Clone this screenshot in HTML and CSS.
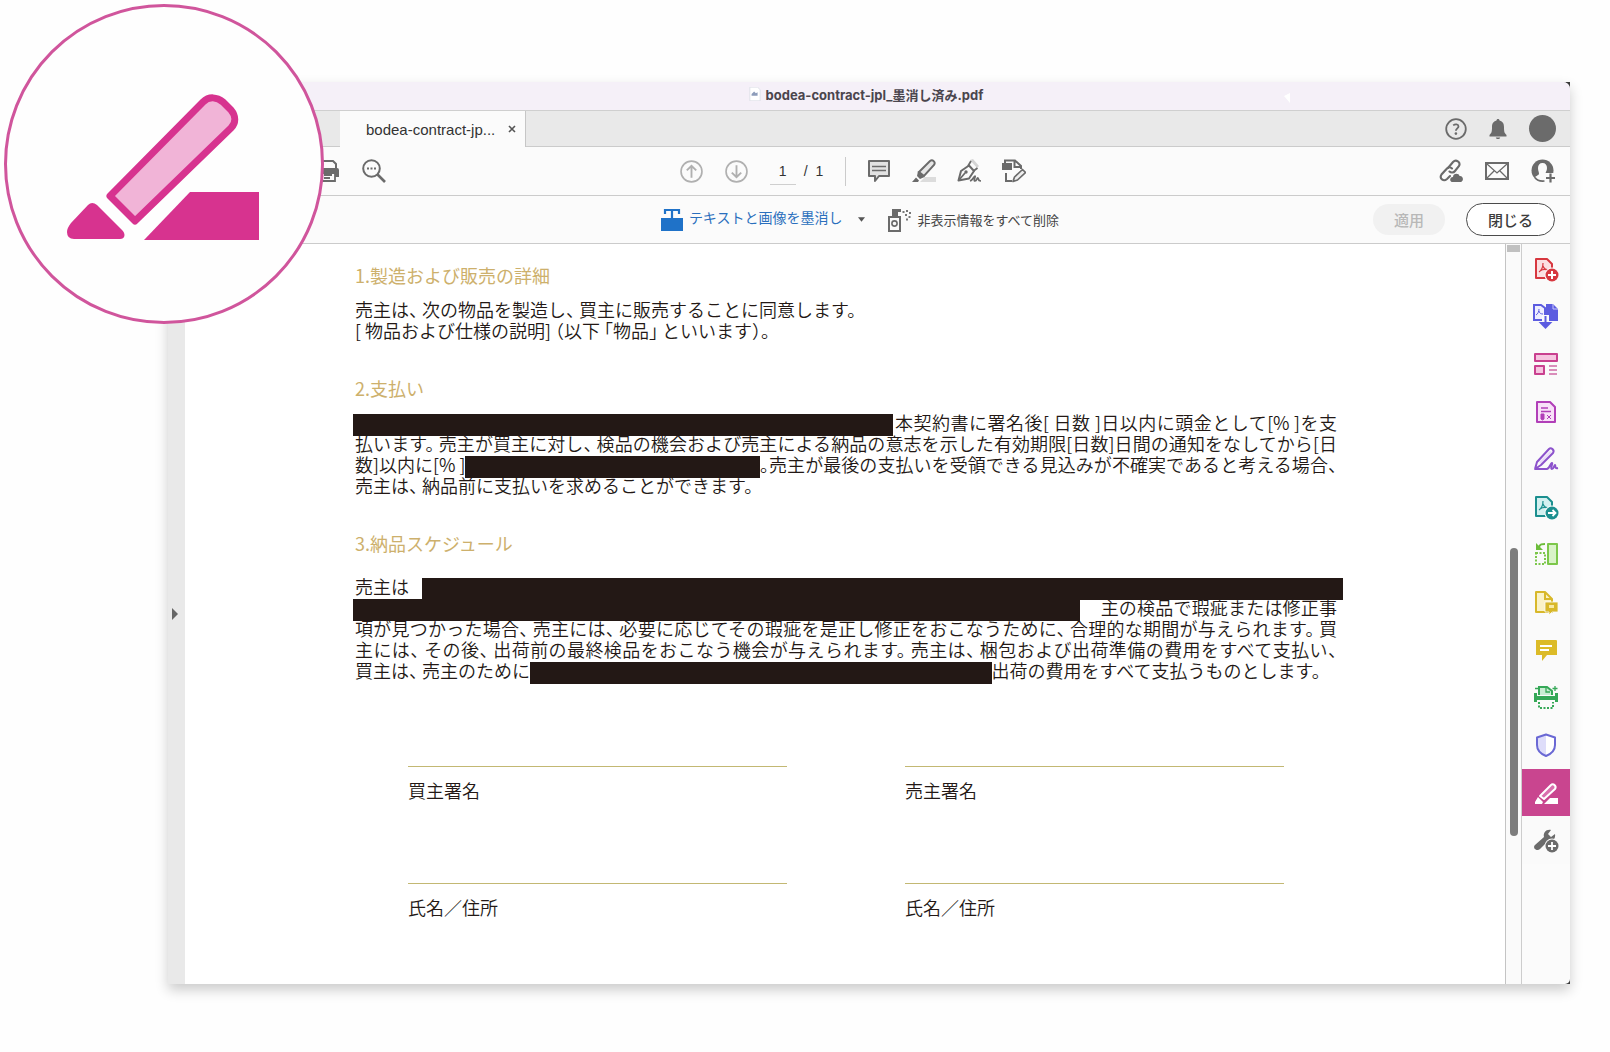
FILE: index.html
```html
<!DOCTYPE html>
<html lang="ja">
<head>
  <meta charset="UTF-8">
  <title>bodea-contract-jpl_墨消し済み.pdf</title>
  <link rel="stylesheet" href="styles.css">
</head>
<body>

  <div class="frame">
    <div class="window">

      <header class="titlebar">
        <svg class="file-icon" viewBox="0 0 14 16"><path d="M1 0h9l3 3v13H1z" fill="#fff" stroke="#dcdfe8"/><path d="M3 8l3-3 2 2 2-1v4H3z" fill="#8d9cba"/></svg>
        <span>bodea-contract-jpl_墨消し済み.pdf</span>
        <svg class="pointer" viewBox="0 0 6 10"><path d="M0 3l6-3v10z" fill="#fff"/></svg>
      </header>

      <div class="tabbar">
        <div class="tab">
          <span>bodea-contract-jp...</span>
          <button class="tab-close" aria-label="閉じる"><svg viewBox="0 0 8 8"><path d="M1 1l6 6M7 1L1 7" stroke="#555" stroke-width="1.6"/></svg></button>
        </div>
        <div class="account">
          <button aria-label="ヘルプ"><svg viewBox="0 0 22 22"><circle cx="11" cy="11" r="9.8" fill="none" stroke="#6b6b6b" stroke-width="1.8"/><path d="M8.2 7.4c2-1.6 5.3-1.2 5.3 1 0 2-2.6 2-2.6 4.4" fill="none" stroke="#6b6b6b" stroke-width="1.8"/><circle cx="10.9" cy="15.6" r="1.3" fill="#6b6b6b"/></svg></button>
          <button aria-label="通知"><svg viewBox="0 0 22 22"><path d="M11 1c1 0 1.5.6 1.5 1.5C16 3.4 17 6 17 9c0 5 .5 6 2.5 8v1.5H2.500V17C4.500 15 5 14 5 9c0-3 1-5.600 4.500-6.500C9.500 1.600 10 1 11 1zM8.800 19.500h4.400c-.4 2-4 2-4.400 0z" fill="#6b6b6b"/></svg></button>
          <button class="avatar" aria-label="アカウント"></button>
        </div>
      </div>

      <div class="toolbar">
        <div class="tools-left">
          <button aria-label="印刷"><svg viewBox="0 0 24 24"><path d="M5 9V2h12l3 3v4" fill="none" stroke="#6b6b6b" stroke-width="2"/><path d="M2 9h19a2 2 0 0 1 2 2v7h-4v-3H5v3H1v-7z" fill="#6b6b6b"/><path d="M5 14v8h14v-8M8 16h8M8 19h6" fill="none" stroke="#6b6b6b" stroke-width="1.8"/></svg></button>
          <button aria-label="検索"><svg viewBox="0 0 24 24"><circle cx="9.5" cy="9.5" r="8.3" fill="none" stroke="#6b6b6b" stroke-width="2"/><path d="M15.500 15.500L23 23" stroke="#6b6b6b" stroke-width="2.6"/><path d="M5 8.500h2v2H5zM8.500 8.500h2v2h-2zM12 8.500h2v2h-2z" fill="#6b6b6b"/></svg></button>
        </div>

        <div class="tools-center">
          <button aria-label="前のページ"><svg viewBox="0 0 22 22"><circle cx="11" cy="11" r="10" fill="none" stroke="#b0b0b0" stroke-width="1.6"/><path d="M11 17V5.500M6.500 10L11 5.500l4.500 4.500" fill="none" stroke="#b0b0b0" stroke-width="1.8"/></svg></button>
          <button aria-label="次のページ"><svg viewBox="0 0 22 22"><circle cx="11" cy="11" r="10" fill="none" stroke="#b0b0b0" stroke-width="1.6"/><path d="M11 5v11.500M6.500 12l4.500 4.500 4.500-4.500" fill="none" stroke="#b0b0b0" stroke-width="1.8"/></svg></button>
          <div class="pager">
            <input type="text" value="1" aria-label="ページ番号">
            <span>/&nbsp; 1</span>
          </div>
          <div class="annotate">
            <button aria-label="注釈"><svg viewBox="0 0 24 24"><path d="M2 2h20v15H12l-4 5v-5H2z" fill="#e2e2e2" stroke="#6b6b6b" stroke-width="2" stroke-linejoin="round"/><path d="M5 7.500h14M5 11.500h14" stroke="#6b6b6b" stroke-width="1.6"/></svg></button>
            <button aria-label="ハイライト"><svg viewBox="0 0 24 24"><path d="M13 18h11v5H8z" fill="#dcdcdc"/><path d="M7 13L18 2c2.500-2 6 1 4 4L12 17z" fill="#e6e6e6" stroke="#6b6b6b" stroke-width="2"/><path d="M6 12l6.500 6L8 20l-3-3zM4 18.500l3 3-1 1.500H0z" fill="#6b6b6b"/></svg></button>
            <button aria-label="署名"><svg viewBox="0 0 24 24"><path d="M13 1l3-1 6 7-2 2z" fill="#d5d5d5"/><path d="M1.500 21.500L4 12l8-5.500 5 5.500-5 7.500z" fill="none" stroke="#6b6b6b" stroke-width="2" stroke-linejoin="round"/><path d="M11 7l3-5M16.500 12l4-3M2 21l6-7" fill="none" stroke="#6b6b6b" stroke-width="1.8"/><circle cx="9" cy="13" r="1.7" fill="#6b6b6b"/><path d="M13 22c3-1 4-5 5-5s-2 5 0 5 2-4 3-3-.5 3 3 3" fill="none" stroke="#6b6b6b" stroke-width="1.7"/></svg></button>
            <button aria-label="編集"><svg viewBox="0 0 24 24"><path d="M0 4h10v7H0z" fill="#6b6b6b"/><path d="M3 4V1.500h10l6 5.500v3M12.500 2v6H19M4 14v8h6" fill="none" stroke="#6b6b6b" stroke-width="2"/><path d="M11 22.500l1.500-4.500 8-7.500 3 3-8 7.500z" fill="#eee" stroke="#6b6b6b" stroke-width="1.7" stroke-linejoin="round"/></svg></button>
          </div>
        </div>

        <div class="tools-right">
          <button aria-label="リンクを共有"><svg viewBox="0 0 24 24"><g fill="none" stroke="#6b6b6b" stroke-width="2.1" stroke-linecap="round"><path d="M9 9l5-6c3-3 8 0 6 4l-4 5c-1.500 2-4 2-5.500.5"/><path d="M13 9.500c-2-2-4-1.500-5.500.5l-5 5.500c-2.500 4 2 7.500 5.500 4.500l3-3"/></g><path d="M13 23c-3-1-2-5 1-5 0-4 6-4 6.500-1 4-.5 4.500 5 1.500 6z" fill="#6b6b6b"/></svg></button>
          <button aria-label="メール"><svg viewBox="0 0 24 24"><path d="M1 4h22v16H1z" fill="none" stroke="#6b6b6b" stroke-width="2"/><path d="M2 5l10 9L22 5M2 19l7-7M22 19l-7-7" fill="none" stroke="#6b6b6b" stroke-width="1.3"/></svg></button>
          <button aria-label="ユーザーを追加"><svg viewBox="0 0 24 24"><circle cx="11.5" cy="11.5" r="11" fill="#6b6b6b"/><path d="M11.500 4c3 0 4.500 2 4.500 5s-1.500 4-1.500 5.500l3 1.500-1 7h-10L4 18.500c1-2 4-2 4-4C8 13 7 12 7 9s1.500-5 4.500-5z" fill="#fbfbfb"/><path d="M14 14h10v10H14z" fill="#fbfbfb"/><path d="M19.500 14.500v9M15 19h9" stroke="#6b6b6b" stroke-width="2.2"/><path d="M4 18.500c2 3 5 4 9.500 3.500" fill="none" stroke="#6b6b6b" stroke-width="1.6"/></svg></button>
        </div>
      </div>

      <div class="redactbar">
        <div class="redact-tools">
          <button class="redact-mark">
            <svg viewBox="0 0 22 22"><path d="M0 9h22v13H0z" fill="#1f72c8"/><path d="M4 5V1h14v4M11 1v8" fill="none" stroke="#1f72c8" stroke-width="2.2"/></svg>
            <span>テキストと画像を墨消し</span>
            <svg class="caret" viewBox="0 0 8 5"><path d="M0 0h8L4 5z" fill="#555"/></svg>
          </button>
          <button class="redact-clean">
            <svg viewBox="0 0 24 24"><path d="M2 9h11v14H2z" fill="none" stroke="#6b6b6b" stroke-width="2"/><path d="M5 6h6v3H5zM5 1h9v3h-3v2H5z" fill="#6b6b6b"/><circle cx="7.5" cy="15.5" r="2.6" fill="none" stroke="#6b6b6b" stroke-width="1.6"/><path d="M15.500 3h2v2h-2zM19 2h2v2h-2zM22 4h2v2h-2zM18 6h2v2h-2zM21.500 8h2v2h-2zM19 10.500h2v2h-2z" fill="#777"/></svg>
            <span>非表示情報をすべて削除</span>
          </button>
        </div>
        <div class="redact-actions">
          <button class="btn-apply" disabled>適用</button>
          <button class="btn-close">閉じる</button>
        </div>
      </div>

      <div class="workspace">
        <button class="left-rail" aria-label="ナビゲーションパネル"><svg viewBox="0 0 6 12"><path d="M0 0l6 6-6 6z" fill="#666"/></svg></button>

        <main class="document">
          <h2>1.製造および販売の詳細</h2>
          <div class="clause">
            <p>売主は、 次の物品を製造し、 買主に販売することに同意します。</p>
            <p>[ 物品および仕様の説明] （以下 「物品」 といいます）。</p>
          </div>

          <h2>2.支払い</h2>
          <div class="clause">
            <p class="split"><span class="redacted from-edge w-55"></span><span class="full">本契約書に署名後[ 日数 ]日以内に頭金として[% ]を支</span></p>
            <p class="full">払います。 売主が買主に対し、 検品の機会および売主による納品の意志を示した有効期限[日数]日間の通知をなしてから[日</p>
            <p class="split"><span>数]以内に[% ]</span><span class="redacted w-30"></span><span class="full tight">。売主が最後の支払いを受領できる見込みが不確実であると考える場合、</span></p>
            <p>売主は、 納品前に支払いを求めることができます。</p>
          </div>

          <h2>3.納品スケジュール</h2>
          <div class="clause clause-delivery">
            <p class="split"><span class="word">売主は</span><span class="redacted to-edge"></span></p>
            <p class="split"><span class="redacted from-edge w-74"></span><span class="full after-gap">主の検品で瑕疵または修正事</span></p>
            <p class="full">項が見つかった場合、 売主には、 必要に応じてその瑕疵を是正し修正をおこなうために、 合理的な期間が与えられます。 買</p>
            <p class="full">主には、 その後、 出荷前の最終検品をおこなう機会が与えられます。 売主は、 梱包および出荷準備の費用をすべて支払い、</p>
            <p class="split"><span>買主は、 売主のために</span><span class="redacted w-47"></span><span>出荷の費用をすべて支払うものとします。</span></p>
          </div>

          <div class="signatures">
            <div class="sign">買主署名</div>
            <div class="sign">売主署名</div>
            <div class="sign">氏名／住所</div>
            <div class="sign">氏名／住所</div>
          </div>
        </main>

        <div class="scrollbar">
          <div class="scroll-stub"></div>
          <div class="scroll-thumb"></div>
        </div>

        <nav class="side-tools">
          <button aria-label="PDFを作成"><svg viewBox="0 0 24 24"><path d="M2 2h11l5 5v14H2z" fill="#fbe0e2" stroke="#d7373f" stroke-width="2" stroke-linejoin="round"/><path d="M5 15c3-2 4-5 4-9M9 9c1 3 3 4 6 4M6 14c3-2 5-2 8-1" fill="none" stroke="#d7373f" stroke-width="1.2"/><circle cx="18" cy="18" r="7.5" fill="#fafafa"/><circle cx="18" cy="18" r="6.500" fill="#d7373f"/><path d="M18 14v8M14 18h8" stroke="#fff" stroke-width="2"/></svg></button>
          <button aria-label="ファイルを結合"><svg viewBox="0 0 24 24"><path d="M0 1h7l4 3v12H0z" fill="#eeeefe" stroke="#5c5ce0" stroke-width="2"/><path d="M2 11c2-1 3-4 3-6M5 7c0 2 2 3 4 3" fill="none" stroke="#5c5ce0"/><path d="M12 0h7l5 5v12H12z" fill="#5c5ce0"/><path d="M19 0v5h5" fill="none" stroke="#c9c9fa"/><path d="M8 11h7v6h4l-7 7-7-7h3z" fill="#fafafa"/><path d="M11.500 12v7M7 19h9l-4.500 4.500z" fill="#5c5ce0" stroke="#5c5ce0" stroke-width="2"/></svg></button>
          <button aria-label="ページを整理"><svg viewBox="0 0 24 24"><path d="M1 2h22v7H1zM1 14h9v8H1z" fill="#f6c5e0" stroke="#c9408f" stroke-width="2" stroke-linejoin="round"/><path d="M15 14h8M15 18h8M15 22h8" stroke="#ce6aa5" stroke-width="1.3"/></svg></button>
          <button aria-label="フォームを準備"><svg viewBox="0 0 24 24"><path d="M3 2h13l5 5v15H3z" fill="#f8e0f8" stroke="#b13fb8" stroke-width="2" stroke-linejoin="round"/><path d="M7 8h7M7 11.500h10" stroke="#b13fb8" stroke-width="1.5"/><path d="M7 14h3v5l-1.500 1L7 19zM13 15l4 4m0-4l-4 4" fill="#b13fb8" stroke="#b13fb8"/></svg></button>
          <button aria-label="入力と署名"><svg viewBox="0 0 24 24"><path d="M5 15L16 4l2 1L7 17z" fill="#eadcf8"/><path d="M1 22l2-7L15 2c2-2 6 1 4 4L7 18l-6 4h12c3-1 3-5 5-6 1 0-2 6 0 6s2-4 3-4-1 4 3 3" fill="none" stroke="#8c52cc" stroke-width="2" stroke-linejoin="round"/></svg></button>
          <button aria-label="PDFを書き出し"><svg viewBox="0 0 24 24"><path d="M2 2h11l5 5v14H2z" fill="#d3f0f0" stroke="#1b8f8f" stroke-width="2" stroke-linejoin="round"/><path d="M5 15c3-2 4-5 4-9M9 9c1 3 3 4 6 4M6 14c3-2 5-2 8-1" fill="none" stroke="#1b8f8f" stroke-width="1.2"/><circle cx="18" cy="18" r="7.5" fill="#fafafa"/><circle cx="18" cy="18" r="6.500" fill="#1b8f8f"/><path d="M14 18h7M18.500 15l3 3-3 3" fill="none" stroke="#fff" stroke-width="1.8"/></svg></button>
          <button aria-label="ページの置換"><svg viewBox="0 0 24 24"><path d="M14 2h9v20h-9z" fill="#d9f3c8" stroke="#7cc74a" stroke-width="2" stroke-linejoin="round"/><path d="M2 11h9v11H2z" fill="none" stroke="#7cc74a" stroke-width="2" stroke-dasharray="2 1.500"/><path d="M2 1v7h7z" fill="#6cbd3a"/><path d="M5 5c1-3 3-3 6-3" fill="none" stroke="#6cbd3a" stroke-width="2"/></svg></button>
          <button aria-label="注釈用に送信"><svg viewBox="0 0 24 24"><path d="M2 2h9l7 7v13H2z" fill="#faf2c8" stroke="#d8b82a" stroke-width="2" stroke-linejoin="round"/><path d="M11 2v7h7" fill="none" stroke="#d8b82a" stroke-width="2"/><path d="M11 12h13v10h-6l-3 3v-3h-4z" fill="#d8b82a" stroke="#fafafa" stroke-width=".8"/><path d="M15 15h5v3h-5z" fill="#f7e9a4"/></svg></button>
          <button aria-label="注釈"><svg viewBox="0 0 24 24"><path d="M2 2h20a1 1 0 0 1 1 1v14H13l-5 6v-6H2z" fill="#dcbb28"/><path d="M6 8h12M6 12h9" stroke="#fff" stroke-width="1.8"/></svg></button>
          <button aria-label="スキャンとOCR"><svg viewBox="0 0 24 24"><path d="M5 10V2h8l5 4v4" fill="#c8edd2" stroke="#35a857" stroke-width="2"/><path d="M0 8h3v3h18V8h3v9h-3v-2H3v2H0z" fill="#35a857"/><path d="M5 17v6h14v-6" fill="none" stroke="#35a857" stroke-width="2" stroke-dasharray="2 1.500"/><path d="M12 3v4h4M21 1v5M18.500 3.500h5M1 3.500h3" fill="none" stroke="#35a857" stroke-width="1.3"/></svg></button>
          <button aria-label="保護"><svg viewBox="0 0 24 24"><path d="M12 1.500l9 3V12c0 5-4 9-9 11-5-2-9-6-9-11V4.500z" fill="#fff"/><path d="M12 2v20c-5-2-8-5-8-10V5z" fill="#deddfa"/><path d="M12 1.500l9 3V12c0 5-4 9-9 11-5-2-9-6-9-11V4.500z" fill="none" stroke="#6a68d4" stroke-width="2" stroke-linejoin="round"/></svg></button>
          <button class="active" aria-label="墨消し"><svg viewBox="0 0 24 24"><path d="M6 15L17 4c2-2.500 6 1 4 4L10 18z" fill="#d970ae" stroke="#fff" stroke-width="2" stroke-linejoin="round"/><path d="M4 16l5 5-1 2H1v-2zM16 17h8v6H10z" fill="#fff"/></svg></button>
          <button aria-label="その他のツール"><svg viewBox="0 0 24 24"><path d="M1 17l9-8c-1-4 2-8 7-7l-3 4 3 3 4-3c1 5-3 8-7 7l-8 8c-3 3-8-1-5-4z" fill="#6b6b6b"/><circle cx="18" cy="18" r="7.5" fill="#fafafa"/><circle cx="18" cy="18" r="6.500" fill="#6b6b6b"/><path d="M18 14v8M14 18h8" stroke="#fff" stroke-width="1.8"/></svg></button>
        </nav>
      </div>

    </div>
  </div>

  <!-- enlarged redact tool -->
  <div class="callout">
    <svg viewBox="3 3 314 314">
      <path d="M84 201q4-4 9 0l25 25c4 4 3 9-2 9H70q-7 0-7-7c0-3 1-5 4-9z" fill="#d7338f"/>
      <path d="M106 192L199 98c6-6 14-5 20 0l8 8c5 6 5 13 0 18L131 217z" fill="#f1b4d7" stroke="#d7338f" stroke-width="7" stroke-linejoin="round"/>
      <path d="M186 188h69v48H140z" fill="#d7338f"/>
    </svg>
  </div>

</body>
</html>
```
FILE: styles.css
```css
* {
  box-sizing: border-box;
}

body {
  margin: 0;
  background-color: #fefefe;
  font-family: "Liberation Sans", "Noto Sans CJK JP", sans-serif;
  color: #333;
}

button {
  padding: 0;
  border: none;
  background: none;
  font-family: inherit;
  color: inherit;
  cursor: pointer;
}

svg {
  display: block;
}

.frame {
  margin: 82px 40px 68px 168px;
  background-color: #3a3a3a;
  box-shadow: 0 6px 12px rgba(0,0,0,0.2);
}

.window {
  display: flex;
  flex-direction: column;
  min-height: calc(100vh - 150px);
  background-color: #fbfbfb;
  border-radius: 0 7px 5px 0;
  overflow: hidden;
}

/* title bar */
.titlebar {
  position: relative;
  display: flex;
  align-items: center;
  justify-content: center;
  gap: 5px;
  height: 28px;
  padding-right: 6px;
  padding-bottom: 4px;
  background-color: #f5f0f8;
  font-family: Inter, "Noto Sans CJK JP", sans-serif;
  font-size: 13px;
  font-weight: 700;
  color: #4a454d;
}

.file-icon {
  width: 12px;
  height: 14px;
}

.pointer {
  position: absolute;
  top: 11px;
  right: 280px;
  width: 6px;
  height: 10px;
}

/* tabs */
.tabbar {
  display: flex;
  justify-content: space-between;
  height: 37px;
  padding-left: 172px;
  padding-right: 14px;
  background-color: #e9e9e9;
  border-top: 1px solid #cfcfcf;
  border-bottom: 1px solid #cbcbcb;
}

.tab {
  display: flex;
  align-items: center;
  justify-content: space-between;
  width: 186px;
  height: 36px;
  padding: 0 9px 0 26px;
  background-color: #fbfbfb;
  border-right: 1px solid #c6c6c6;
  font-size: 15px;
}

.tab-close svg {
  width: 8px;
  height: 8px;
}

.account {
  display: flex;
  align-items: center;
  gap: 20px;
}

.account svg {
  width: 22px;
  height: 22px;
}

.avatar {
  width: 27px;
  height: 27px;
  border-radius: 50%;
  background-color: #6b6b6b;
}

/* main toolbar */
.toolbar {
  display: grid;
  grid-template-columns: 512fr auto 544fr;
  align-items: center;
  height: 49px;
  border-bottom: 1px solid #cbcbcb;
}

.toolbar svg {
  width: 24px;
  height: 24px;
}

.tools-left,
.tools-center,
.tools-right,
.annotate,
.pager {
  display: flex;
  align-items: center;
}

.tools-left {
  gap: 22px;
  padding-left: 148px;
}

.tools-center {
  gap: 22px;
}

.tools-center > button svg {
  width: 23px;
  height: 23px;
}

.pager {
  gap: 8px;
  font-size: 14px;
}

.pager input {
  width: 26px;
  height: 27px;
  padding: 0;
  border: none;
  border-bottom: 1px solid #cfcfcf;
  background: none;
  font-family: inherit;
  font-size: 14px;
  color: #333;
  text-align: center;
}

.annotate {
  gap: 21px;
  padding-left: 21px;
  border-left: 1px solid #cbcbcb;
  height: 29px;
}

.tools-right {
  justify-content: flex-end;
  gap: 22px;
  padding-right: 15px;
}

/* redaction bar */
.redactbar {
  display: grid;
  grid-template-columns: 491fr auto 509fr;
  align-items: center;
  height: 48px;
  border-bottom: 1px solid #cbcbcb;
  font-family: "Noto Sans CJK JP", sans-serif;
}

.redact-tools {
  grid-column: 2;
  display: flex;
  align-items: center;
  gap: 22px;
}

.redact-mark,
.redact-clean {
  display: flex;
  align-items: center;
  gap: 6px;
  font-size: 13px;
  line-height: 20px;
  color: #444;
}

.redact-mark {
  font-size: 14px;
  color: #2a6fbd;
}

.redact-mark span {
  padding-bottom: 6px;
}

.redact-mark svg {
  width: 22px;
  height: 22px;
}

.redact-mark .caret {
  width: 7px;
  height: 5px;
  margin-left: 10px;
}

.redact-clean svg {
  width: 24px;
  height: 24px;
}

.redact-actions {
  display: flex;
  align-items: center;
  justify-content: flex-end;
  gap: 21px;
  padding-right: 15px;
}

.btn-apply,
.btn-close {
  height: 31px;
  padding: 0 21px;
  border-radius: 17px;
  font-size: 15px;
  font-weight: 500;
  line-height: 24px;
}

.btn-apply {
  background-color: #f1f1f1;
  color: #b8b8b8;
}

.btn-close {
  height: 33px;
  border: 1px solid #4b4b4b;
  background-color: #fff;
  color: #3c3c3c;
}

/* document area */
.workspace {
  display: flex;
  flex: 1;
}

.left-rail {
  display: flex;
  align-items: center;
  width: 17px;
  padding-left: 4px;
  background-color: #e9e9e9;
}

.left-rail svg {
  width: 6px;
  height: 12px;
}

.document {
  flex: 1;
  padding: 19px 168px 40px 170px;
  background-color: #fff;
  font-family: "Noto Sans CJK JP", sans-serif;
  font-size: 18px;
  font-weight: 350;
  line-height: 21px;
  color: #231815;
  font-feature-settings: "halt";
}

.document h2 {
  margin: 0 0 12px;
  font-size: 18px;
  font-weight: 400;
  line-height: 24px;
  color: #cdb06c;
}

.clause {
  margin-bottom: 35px;
}

.clause-delivery {
  margin-top: 21px;
}

.clause p {
  height: 21px;
  margin: 0;
  white-space: nowrap;
}

.full {
  text-align: justify;
  text-align-last: justify;
}

.clause p.full {
  white-space: normal;
}

.split {
  display: flex;
}

.split .full {
  flex: 1;
  white-space: normal;
}

.split .tight {
  white-space: nowrap;
}

.word {
  margin-right: 13px;
}

.redacted {
  flex-shrink: 0;
  height: 22px;
  margin-top: 2px;
  background-color: #231815;
}

.from-edge {
  margin-left: -2px;
  margin-right: 2px;
}

.to-edge {
  flex: 1;
  margin-right: -6px;
}

.w-30 {
  width: 30%;
}

.w-47 {
  width: 47%;
}

.w-55 {
  width: 55%;
}

.w-74 {
  width: 74%;
}

.after-gap {
  margin-left: 19px;
}

.signatures {
  display: grid;
  grid-template-columns: 1fr 1fr;
  grid-template-rows: 117px auto;
  column-gap: 118px;
  margin: 85px 53px 0;
}

.sign {
  padding-top: 13px;
  border-top: 1px solid #c3b873;
}

/* scrollbar and tool pane */
.scrollbar {
  width: 17px;
  border-left: 1px solid #c4c4c4;
  border-right: 1px solid #cdcdcd;
  background-color: #fafafa;
}

.scroll-stub {
  height: 7px;
  margin: 1px 1px 0;
  background-color: #c0c0c0;
}

.scroll-thumb {
  width: 8px;
  height: 288px;
  margin: 296px auto 0;
  border-radius: 4px;
  background-color: #7d7d7d;
}

.side-tools {
  display: grid;
  grid-auto-rows: 1fr;
  width: 48px;
  height: 620px;
  padding-top: 1px;
  background-color: #fafafa;
}

.side-tools button {
  display: flex;
  align-items: center;
  justify-content: center;
}

.side-tools svg {
  width: 24px;
  height: 24px;
  overflow: visible;
}

.side-tools .active {
  background-color: #c9458f;
}

/* round callout over the window corner */
.callout {
  position: absolute;
  top: 4px;
  left: 4px;
  width: 320px;
  height: 320px;
  border: 3px solid #d0559c;
  border-radius: 50%;
  background-color: #fefefe;
}

.callout svg {
  width: 100%;
  height: 100%;
}
```
